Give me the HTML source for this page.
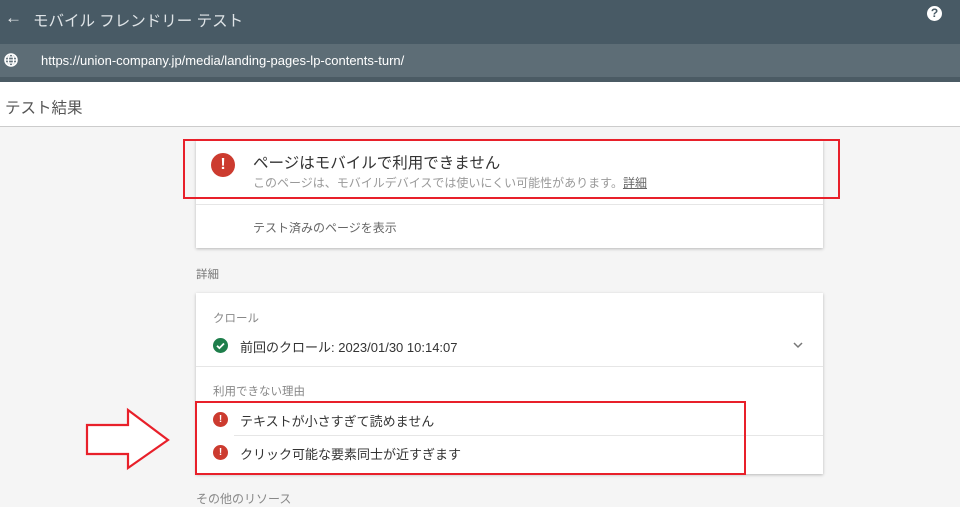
<!DOCTYPE html>
<html><head><meta charset="utf-8"><style>
*{margin:0;padding:0;box-sizing:border-box}
body{width:960px;height:501px;overflow:hidden;background:#f5f5f5;font-family:"Liberation Sans","Noto Sans CJK JP",sans-serif;position:relative}
.a{position:absolute}
.card{background:#fff;box-shadow:0 1px 3px rgba(0,0,0,.25)}
.t{white-space:nowrap}
</style></head><body>
<div class="a" style="left:0;top:0;width:960px;height:44px;background:#485a65"></div>
<div class="a t" style="left:5px;top:8px;color:#e6eaec;font-size:17px">←</div>
<div class="a t" style="left:33px;top:9px;color:#dfe4e7;font-size:15.5px">モバイル フレンドリー テスト</div>
<div class="a" style="left:927px;top:6px;width:15px;height:15px;border-radius:50%;background:#fff;color:#485a65;font-size:12px;font-weight:bold;text-align:center;line-height:15px">?</div>
<div class="a" style="left:0;top:44px;width:960px;height:33px;background:#5d6d76"></div>
<div class="a" style="left:0;top:77px;width:960px;height:5px;background:#4b5b64"></div>
<svg class="a" style="left:4px;top:53px" width="14" height="14" viewBox="0 0 14 14"><circle cx="7" cy="7" r="6" fill="none" stroke="#fff" stroke-width="1.6"/><ellipse cx="7" cy="7" rx="2.6" ry="6" fill="none" stroke="#fff" stroke-width="1.3"/><path d="M1 7h12M2 4h10M2 10h10" stroke="#fff" stroke-width="1.2"/></svg>
<div class="a t" style="left:41px;top:53px;color:#fff;font-size:13px">https://union-company.jp/media/landing-pages-lp-contents-turn/</div>
<div class="a" style="left:0;top:82px;width:960px;height:45px;background:#fff;border-bottom:1px solid #ccc"></div>
<div class="a t" style="left:5px;top:96px;color:#555;font-size:15.5px">テスト結果</div>

<div class="a card" style="left:196px;top:140px;width:627px;height:108px"></div>
<div class="a" style="left:196px;top:204px;width:627px;height:1px;background:#e6e6e6"></div>
<div class="a" style="left:183px;top:139px;width:657px;height:60px;border:2px solid #e8202a"></div>
<div class="a" style="left:211px;top:153px;width:24px;height:24px;border-radius:50%;background:#cc3b2f;color:#fff;font-weight:bold;font-size:16px;text-align:center;line-height:24px">!</div>
<div class="a t" style="left:253px;top:151px;color:#333;font-size:15.5px">ページはモバイルで利用できません</div>
<div class="a t" style="left:253px;top:174px;color:#999;font-size:12px">このページは、モバイルデバイスでは使いにくい可能性があります。<span style="color:#666;text-decoration:underline">詳細</span></div>
<div class="a t" style="left:253px;top:219px;color:#666;font-size:12px">テスト済みのページを表示</div>

<div class="a t" style="left:196px;top:266px;color:#777;font-size:11.5px">詳細</div>
<div class="a card" style="left:196px;top:293px;width:627px;height:181px"></div>
<div class="a t" style="left:213px;top:310px;color:#888;font-size:11.5px">クロール</div>
<svg class="a" style="left:213px;top:338px" width="15" height="15" viewBox="0 0 15 15"><circle cx="7.5" cy="7.5" r="7.5" fill="#1e7e4b"/><path d="M4 7.7l2.4 2.4 4.6-4.6" fill="none" stroke="#fff" stroke-width="1.8"/></svg>
<div class="a t" style="left:240px;top:337px;color:#333;font-size:13px">前回のクロール: 2023/01/30 10:14:07</div>
<svg class="a" style="left:793px;top:342px" width="10" height="7" viewBox="0 0 10 7"><path d="M1 1l4 4 4-4" fill="none" stroke="#777" stroke-width="1.5"/></svg>
<div class="a" style="left:196px;top:366px;width:627px;height:1px;background:#e6e6e6"></div>
<div class="a t" style="left:213px;top:383px;color:#888;font-size:11.5px">利用できない理由</div>
<div class="a" style="left:234px;top:435px;width:589px;height:1px;background:#e6e6e6"></div>
<div class="a" style="left:213px;top:412px;width:15px;height:15px;border-radius:50%;background:#cc3b2f;color:#fff;font-weight:bold;font-size:10px;text-align:center;line-height:15px">!</div>
<div class="a t" style="left:240px;top:411px;color:#333;font-size:13px">テキストが小さすぎて読めません</div>
<div class="a" style="left:213px;top:445px;width:15px;height:15px;border-radius:50%;background:#cc3b2f;color:#fff;font-weight:bold;font-size:10px;text-align:center;line-height:15px">!</div>
<div class="a t" style="left:240px;top:444px;color:#333;font-size:13px">クリック可能な要素同士が近すぎます</div>
<div class="a" style="left:195px;top:401px;width:551px;height:74px;border:2px solid #e8202a"></div>
<svg class="a" style="left:0;top:0" width="960" height="501"><path d="M87 425H128V410L168 440 128 468V454H87Z" fill="#fff" stroke="#e8202a" stroke-width="2.2" stroke-linejoin="miter"/></svg>
<div class="a t" style="left:196px;top:490px;color:#888;font-size:12px">その他のリソース</div>
</body></html>
